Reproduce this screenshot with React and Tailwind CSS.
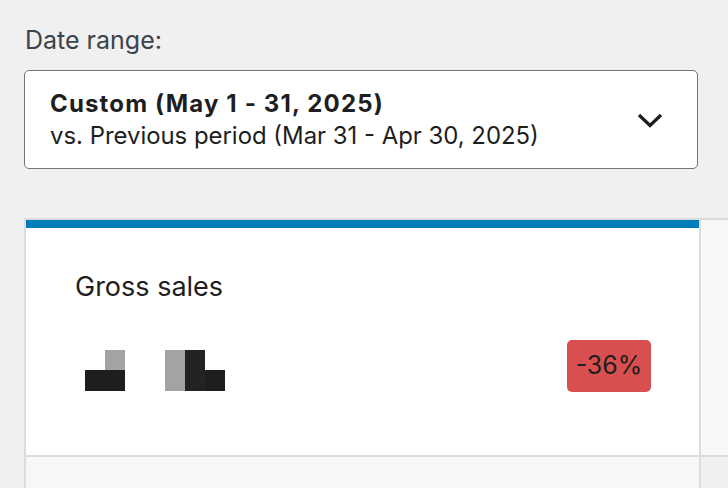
import React from 'react';

const font = { fontFamily: 'Inter, "Noto Sans", sans-serif' };

const Redacted = () => (
    <svg width="140" height="41" viewBox="0 0 140 41" className="block">
        <rect x="20" y="0" width="20" height="20" fill="#a3a3a3" />
        <rect x="0" y="20" width="40" height="21" fill="#1e1e1e" />
        <rect x="80" y="0" width="20" height="41" fill="#a3a3a3" />
        <rect x="100" y="0" width="20" height="41" fill="#232323" />
        <rect x="120" y="20" width="20" height="21" fill="#1e1e1e" />
    </svg>
);

export default function App() {
    return (
        <div className="w-[728px] h-[488px] overflow-hidden bg-[#f0f0f0]" style={font}>
            <div className="pl-[24px] pt-[24px]">
                <p className="pl-px text-[25px] leading-[32px] text-[#3c434a]">Date range:</p>

                <button className="mt-[14px] w-[674px] h-[99px] flex items-center justify-between bg-white border-[1.5px] border-[#757575] rounded-[5px] pl-[25px] pr-[34px] text-left">
                    <div className="flex flex-col">
                        <span className="text-[24px] leading-[32px] font-bold tracking-[0.048em] text-[#1e1e1e]">Custom (May 1 - 31, 2025)</span>
                        <span className="text-[23.9px] leading-[32px] text-[#1e1e1e]">vs. Previous period (Mar 31 - Apr 30, 2025)</span>
                    </div>
                    <svg width="26" height="16" viewBox="0 0 26 16" className="shrink-0">
                        <path d="M2 3 L13 13.5 L24 3" fill="none" stroke="#1e1e1e" strokeWidth="3.2" />
                    </svg>
                </button>

                {/* summary grid */}
                <div className="mt-[49px] w-[900px] grid grid-cols-[675px_1fr] border-t-2 border-l-2 border-[#dcdcde]">
                    <div className="bg-white border-r-2 border-b-2 border-[#dcdcde] h-[237px] flex flex-col">
                        <div className="h-[8px] bg-[#007cba]" />
                        <div className="pl-[49px] pr-[47px] pt-[41px]">
                            <p className="text-[27px] leading-[36px] text-[#1e1e1e]">Gross sales</p>
                            <div className="mt-[35px] flex items-end justify-between">
                                <div className="pl-[10px] pb-px">
                                    <Redacted />
                                </div>
                                <span className="mr-px w-[84px] h-[52px] flex items-center justify-center rounded-[5px] bg-[#d94f4f] text-[25px] text-[#1e1e1e]">-36%</span>
                            </div>
                        </div>
                    </div>
                    <div className="bg-[#f6f7f7] border-b-2 border-[#dcdcde]" />
                    <div className="bg-[#f6f7f7] border-r-2 border-[#dcdcde] h-[40px]" />
                    <div className="bg-[#f0f0f0]" />
                </div>
            </div>
        </div>
    );
}
